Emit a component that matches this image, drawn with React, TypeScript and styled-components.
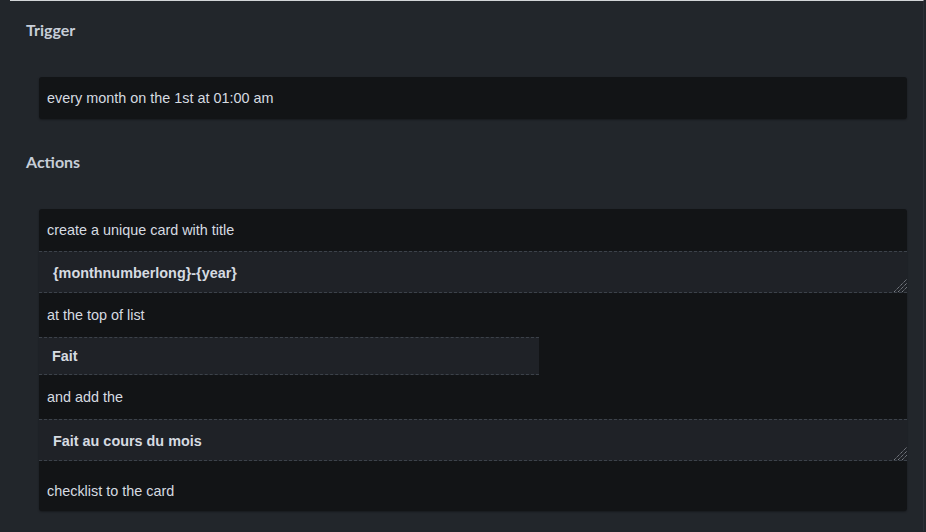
import React from "react";
import styled, { createGlobalStyle } from "styled-components";

const Global = createGlobalStyle`
  html, body { margin: 0; padding: 0; background: #22262b; }
  body { width: 926px; height: 532px; overflow: hidden; }
`;

const Page = styled.div`
  margin: 0 2px 0 10px;
  border-top: 1px solid #d2d5d8;
  padding: 18px 16px 0 16px;
  height: 531px;
  box-sizing: border-box;
  border-right: 1px solid #2c3036;
`;

const Heading = styled.h3<{ $gap: number }>`
  margin: 0 0 ${(p) => p.$gap}px 0;
  font-family: Lato, "Open Sans", sans-serif;
  font-weight: 700;
  font-size: 16px;
  line-height: 22px;
  color: #c7ced8;
`;

const Box = styled.div<{ $after?: number }>`
  margin: 0 0 ${(p) => p.$after ?? 0}px 13px;
  background: #121416;
  border-radius: 3px;
  box-shadow: 0 1px 2px rgba(0, 0, 0, 0.35);
  display: flex;
  flex-direction: column;
  overflow: hidden;
`;

const Line = styled.div<{ $h: number; $pb?: number }>`
  height: ${(p) => p.$h}px;
  box-sizing: border-box;
  display: flex;
  align-items: ${(p) => (p.$pb ? "flex-end" : "center")};
  padding: 0 8px ${(p) => p.$pb ?? 0}px 8px;
  font-family: "Liberation Sans", Arial, sans-serif;
  font-size: 14.4px;
  color: #d6dbe1;
`;

const AreaWrap = styled.div`
  position: relative;
  height: 42px;
`;

const Area = styled.textarea`
  display: block;
  width: 100%;
  height: 42px;
  box-sizing: border-box;
  margin: 0;
  padding: 12px 14px 10px 14px;
  background: #1f2227;
  border: none;
  border-top: 1px dashed #3c424a;
  border-bottom: 1px dashed #3c424a;
  border-radius: 0;
  color: #d6dbe1;
  font-family: "Liberation Sans", Arial, sans-serif;
  font-weight: 700;
  font-size: 14.4px;
  line-height: 18px;
  resize: none;
  outline: none;
`;

const Grip = styled.svg`
  position: absolute;
  right: 0;
  bottom: 1px;
  width: 14px;
  height: 14px;
  pointer-events: none;
`;

const Select = styled.div`
  width: 500px;
  height: 38px;
  box-sizing: border-box;
  display: flex;
  align-items: center;
  padding: 0 13px;
  background: #1f2227;
  border-top: 1px dashed #3c424a;
  border-bottom: 1px dashed #3c424a;
  font-family: "Liberation Sans", Arial, sans-serif;
  font-weight: 700;
  font-size: 14.4px;
  color: #d6dbe1;
`;

function TextField({ value }: { value: string }) {
  return (
    <AreaWrap>
      <Area defaultValue={value} rows={1} />
      <Grip viewBox="0 0 14 14">
        <g stroke="#8b9097" strokeWidth="1" strokeDasharray="1.2 0.8">
          <line x1="1" y1="14" x2="14" y2="1" />
          <line x1="5" y1="14" x2="14" y2="5" />
          <line x1="9" y1="14" x2="14" y2="9" />
        </g>
      </Grip>
    </AreaWrap>
  );
}

export default function App() {
  return (
    <>
      <Global />
      <Page>
        <Heading $gap={36}>Trigger</Heading>
        <Box $after={32}>
          <Line $h={42}>every month on the 1st at 01:00 am</Line>
        </Box>
        <Heading $gap={36}>Actions</Heading>
        <Box>
          <Line $h={42}>create a unique card with title</Line>
          <TextField value="{monthnumberlong}-{year}" />
          <Line $h={44}>at the top of list</Line>
          <Select>Fait</Select>
          <Line $h={44}>and add the</Line>
          <TextField value="Fait au cours du mois" />
          <Line $h={50} $pb={12}>checklist to the card</Line>
        </Box>
      </Page>
    </>
  );
}
